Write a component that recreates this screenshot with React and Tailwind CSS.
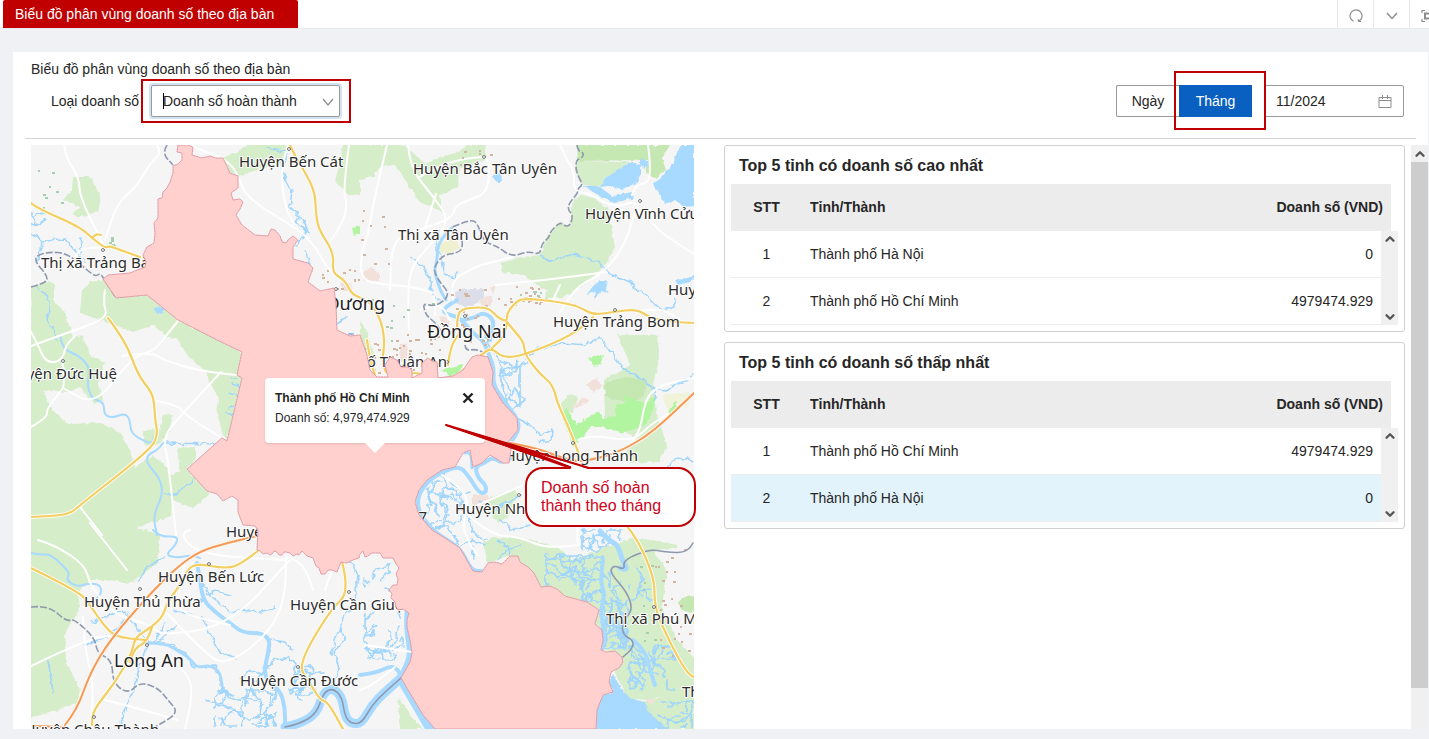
import React from "react";
import { ChevronDown, ChevronUp } from "lucide-react";

const provinceOutline =
  "M178 145L177 152 182 153 182 160 178 164 173 166 173 173 170 182 167 188 163 192 162 198 158 199 158 218 154 223 155 234 154 243 147 247 143 255 146 262 145 267 130 273 108 275 103 279 116 298 147 295 178 320 217 340 242 352 237 375 242 378 227 441 222 438 187 469 207 491 217 494 223 501 232 496 238 500 238 512 243 525 255 526 258 530 257 550 260 551 263 554 267 553 270 555 273 553 274 551 277 552 279 555 282 555 284 552 286 552 290 553 293 556 297 554 299 555 302 551 307 556 313 558 316 566 319 568 321 574 325 574 328 570 332 570 337 572 339 567 341 562 347 563 353 560 359 558 360 554 363 551 365 557 368 556 372 553 380 553 383 558 388 558 393 558 396 564 399 568 396 574 398 579 397 585 393 585 389 590 392 594 391 598 395 602 396 607 398 610 403 609 409 613 407 620 407 627 410 640 412 653 410 662 401 678 423 715 435 729H596L597 710 603 695 613 692 609 682 611 672 619 668 623 662 622 657 615 651 606 652 601 650 603 640 602 630 595 624 599 610 587 602 565 596 557 589 550 586 541 587 534 573 528 567 520 562 518 556 510 556 502 564 495 562 488 563 482 572 473 571 460 548 445 538 432 530 419 515 415 502 419 490 427 480 442 470 455 467 463 453 470 450 473 467 482 463 490 455 503 463 509 463 511 450 508 442 518 430 517 418 503 403 492 385 493 372 488 357 478 355 472 357 463 370 453 376 438 378 437 362 432 361 428 358 422 363 422 373 412 378 412 370 408 367 401 367 397 360 390 357 385 365 388 377 377 377 370 370 367 355 360 335 350 336 337 330 336 305 334 288 320 291 308 282 313 268 308 263 293 259 293 247 298 240 293 236 288 240 286 243 282 242 280 236 275 230 271 229 268 236 255 235 242 225 236 215 240 209 243 202 240 199 233 200 231 193 238 188 238 176 230 173 223 158 216 158 210 156 202 158 192 155 193 147 188 145Z";

const greens = [
  "M73 177L90 177 101 197 98 212 80 217 72 214 80 207 63 200 72 190Z",
  "M223 158L240 150 260 145 287 145 285 152 283 163 263 168 250 172 240 177 230 173Z",
  "M343 145H405L412 152 425 164 437 158 455 153 468 145H487L485 160 460 167 457 187 440 195 443 212 420 202 407 183 395 165 380 167 373 177 360 180 360 195 347 195 335 180 340 163Z",
  "M90 282L108 280 117 298 147 295 178 320 217 340 242 352 237 375 242 378 227 441 223 435 217 413 219 400 213 388 205 372 187 355 177 338 167 337 153 325 133 332 80 313 82 290Z",
  "M31 287L50 280 55 285 53 300 65 313 73 337 82 335 90 355 105 362 98 385 103 400 94 404 80 387 68 392 43 390 52 410 68 424 100 423 120 432 130 450 135 467 153 455 168 468 170 475 180 472 177 448 195 447 195 460 187 469 210 493 193 508 173 500 172 517 153 522 145 527 160 535 158 563 130 583 107 580 90 580 78 593 80 607 65 633 67 663 80 690 77 703 50 713 31 719Z",
  "M143 432L153 428 158 435 163 415 172 414 170 430 163 440 155 446 144 444Z",
  "M573 200L582 195 593 198 608 208 611 225 615 247 605 265 593 278 573 293 560 298 545 298 548 290 540 287 523 275 502 272 502 263 520 257 540 255 547 237 560 222 570 227Z",
  "M577 161L630 162 605 178 600 187 583 185 575 170Z",
  "M618 335H658L659 360 653 385 656 412 667 445 660 462 630 463 627 448 640 440 605 420 604 380 630 365 622 345Z",
  "M483 543L493 538 520 537 557 547 573 560 607 547 620 543 633 537 678 545 678 548 653 550 667 570 662 607 677 640 694 667 694 690 647 700 627 698 615 673 623 660 615 651 601 650 602 630 595 624 599 610 565 596 541 587 520 562 510 556 488 563Z",
  "M643 702L694 690V729H663L650 713Z",
  "M398 698L405 706 411 717 424 729H400Z",
  "M484 500L515 488 517 498 507 518 498 522 490 514Z",
  "M360 320L366 330 371 345 375 358 366 355 360 335Z",
  "M560 405L570 394 578 398 572 412 563 414Z",
];

const darkGreens = [
  "M577 145H670L662 158 666 170 655 178 645 172 648 160 578 161Z",
  "M605 382L627 377 647 380 643 398 627 402 605 397Z",
  "M678 603L687 596 694 597V614L683 611Z",
];

const brightGreens = [
  "M560 413L567 409 576 424 600 411 603 419 616 416 615 405 626 402 624 395 643 403 656 397 652 413 645 425 632 430 620 433 604 427 590 427 582 439 572 447 570 437Z",
  "M596 361L602 354 601 358 605 354 602 360 598 367Z",
  "M668 403L677 399 677 411 671 417 668 411Z",
  "M352 228L360 226V234L354 236Z",
  "M440 370L462 364 462 371 450 376Z",
  "M588 358L598 355 601 361 594 366Z",
];

const pinkPatches = [
  "M363 273L370 267 379 272 379 281 364 280Z",
  "M400 345L407 343 407 360 400 361Z",
  "M586 385L596 378 602 386 594 393Z",
  "M572 408L584 397 589 401 577 409Z",
  "M473 494L488 496 491 506 480 511 472 504Z",
  "M490 287L496 285 493 294Z",
  "M480 297L492 296 491 306 481 306Z",
  "M648 699L653 698 654 703 648 703Z",
  "M340 284L350 282 352 290 344 292Z",
  "M440 318L447 316 450 325 443 328Z",
];

const whiteRoads = [
  "M64 145L66 158 79 177 80 198 105 248",
  "M157 145L162 153 150 163 138 185 117 203 105 240",
  "M105 248L82 246 72 262",
  "M105 290L103 303 108 318 70 332 31 346",
  "M178 321L165 337 155 350 131 358 95 406 63 388",
  "M31 332L38 345 46 363 62 361 66 345 75 336",
  "M63 388L65 377 62 361",
  "M31 427L48 417 46 410 63 388",
  "M122 356L152 352 163 360 200 371 236 375",
  "M153 400L178 405 184 414 220 437",
  "M221 372L181 415 163 437 168 460 176 535",
  "M80 507L102 535",
  "M192 146L205 152 223 158 237 171 245 197 294 227 311 240 330 273 345 282",
  "M288 147L280 165 285 208 294 224",
  "M349 145L343 190 347 203 344 220 331 240",
  "M387 145L375 195 368 235 362 250 360 280 385 285 410 286 434 293",
  "M408 145L410 168 432 195 450 220 430 245 410 268 408 300 409 330",
  "M418 178L440 164 480 156 490 160 488 192 470 200 456 205 452 218 425 228 392 238 390 290",
  "M436 194L425 228",
  "M560 145L567 160 574 171 574 192 590 193 613 208 640 200 632 220 627 240 606 272 577 286 560 312",
  "M639 205L655 228 675 242 694 254",
  "M648 145L653 182 637 184 632 195",
  "M606 272L555 279 495 285",
  "M512 257L480 265 470 270 452 280 453 300",
  "M552 302L560 285",
  "M635 312L660 307 680 320",
  "M694 378L670 382 653 390 645 402 640 430 632 442",
  "M578 440L590 434 632 442 650 425 668 414",
  "M420 310L440 302 450 320",
  "M434 296L435 315",
  "M38 540L55 545 85 565 90 585 104 603 117 615 150 625 163 636 230 625 290 560",
  "M90 523L127 570",
  "M31 666L90 638 110 636",
  "M83 617L85 650 93 680 92 715",
  "M105 700L155 713 177 720",
  "M150 595L205 655 228 665 268 634 285 600 286 558",
  "M185 563L175 600 185 615 230 625",
  "M165 655L190 673 192 700 185 729",
  "M286 557L300 560 310 580 313 590",
  "M365 645L412 652",
  "M360 690L370 687 395 667",
  "M190 530L178 533 200 555 285 560",
  "M442 475L465 490 468 510 462 525 470 545 478 555",
  "M467 510L490 500 530 482 575 470",
  "M468 515L490 535 520 537 545 548 580 545",
  "M580 500L577 530 578 545",
  "M325 590L335 560 342 562",
];

const yellowRoads = [
  "M31 203L37 208 80 227 92 238 105 248 110 246 120 250 140 257",
  "M92 238L96 234 101 235",
  "M290 145L297 160 305 172 315 192 316 215 319 230 334 253 332 273 345 280 352 295 368 300 380 317 385 340 382 362 386 372",
  "M457 330L457 320 460 309 480 307 490 309 497 317 507 322 507 313 515 303 523 298 560 302 580 307 593 315 613 312 637 309 650 318 673 322 694 323",
  "M507 322L518 335 524 343 525 355 540 374 550 382 555 392 557 402 572 435 580 458 600 500 633 530 655 578 654 607 670 643 687 673 694 677",
  "M463 370L483 353 492 348 503 358 525 355 573 335 593 317",
  "M507 322L505 336 492 348",
  "M108 318L125 340 138 375 150 390 154 400 155 420 158 435 150 450 80 505 69 515 31 517",
  "M31 568L80 592 90 605 102 623 115 637 145 640",
  "M259 550L243 563 227 569 195 563 185 573 180 585 167 603 163 616 152 627 135 637 132 653 115 683 93 710 92 725",
  "M152 627L148 641 135 648 130 662",
  "M342 562L350 592 330 610 298 665 308 680 320 700 328 702 343 729",
  "M367 340L370 360 375 375",
  "M448 365L450 348 458 335",
  "M405 375L415 372 422 375",
];

const orangeRoads = [
  "M65 725L77 710 90 673 110 640 147 597 177 567 200 551 227 543 257 536",
  "M510 443L533 447 560 457 577 462 600 458 623 450 653 432 694 393",
  "M33 726L65 727",
];

const boundaries = [
  "M31 287L47 283 47 275 35 262 37 255 50 252 65 253 78 262 95 277 100 273 104 279 116 298",
  "M167 145L162 153 173 165",
  "M577 145L578 151 584 153 582 158 576 160 576 172 583 185 578 188 578 193 569 203 568 210 573 215 570 226 564 226 560 222 550 232 549 238 542 243 540 255 528 251 512 257 498 247 490 244 483 240 477 222 470 220 452 227",
  "M462 240L463 248 457 253 443 255 433 268 438 280 451 295 435 307 423 303 425 312 428 317 438 325 445 340",
  "M31 607L48 605 67 622 73 618 95 638 97 653 112 660 113 683 128 694 140 682 158 688 168 700 179 713 155 727",
  "M465 345L466 351 475 349 485 353",
];

const solidBoundaries = [
  "M693 543L688 553 665 552 650 549 623 560 625 570 613 565 610 573 627 592 633 610 622 622 623 635 633 640 633 648 623 657",
  "M285 727L300 724 317 713 323 693 333 688 342 697 345 717 352 724 362 723 372 705 385 692 401 678",
];

const creeks = [
  "M31 213L36 225 45 220M33 216L44 213M31 225L38 222",
  "M31 233L42 240 65 239 76 252 84 262M42 240L41 250 37 262M82 238L80 252",
  "M36 287L46 295 50 310 47 320 57 340",
  "M264 147L275 150 288 151M288 151L281 170 292 190 290 207 300 217 307 225 305 235 296 245M300 215L296 223 304 227 308 232",
  "M305 252L310 263 304 263 313 272",
  "M334 320L337 323 345 318",
  "M412 258L425 270 432 283 430 290 440 300",
  "M438 230L436 250 442 260 445 275 455 278 457 272",
  "M540 255L553 261 570 255 588 258 600 263 612 275 630 283 640 290 653 302 662 311 675 307 675 296",
  "M163 443L220 444",
  "M163 494L176 494 195 479",
  "M238 378L232 378M239 386L231 384M237 395L230 393M234 406L229 408M232 415L226 412",
  "M92 622L110 615 125 611 135 625 148 642 165 643 185 652 193 667 215 665 223 690 235 697",
  "M85 645L110 635 124 620",
  "M48 660L53 692",
  "M147 645L140 665 133 690 122 720 118 729",
  "M165 623L155 640M178 623L160 640",
  "M165 557L148 567 138 580",
  "M197 575L210 595 230 612 240 610 260 612 275 608M175 610L190 615 203 617 210 635 220 652 235 658",
  "M200 600L215 590 230 597",
  "M270 640L285 642 292 650M262 675L250 670 240 680M262 675L275 660 290 657 296 665",
  "M223 690L232 700 247 697 262 705 258 718M205 700L230 708 250 720M300 700L290 690 302 682 315 690",
  "M340 625L345 640 335 650 340 670 330 690M350 560L358 575 355 600 345 615 335 640 332 655",
  "M270 650L265 668 250 690 245 705",
  "M485 335L490 348 500 360 515 367 530 362 538 370M500 370L508 385 510 400 520 408 510 398 515 388 525 400 512 410",
  "M517 418L530 425 540 435 553 430 552 440 538 442M525 360L535 350 548 347 562 343 585 345 600 338 610 350 625 370 640 378 653 388 665 390 694 375",
  "M442 470L445 485 460 495 470 492M440 495L455 500 465 512 455 525 445 520M465 512L475 535 488 540M445 485L440 500 448 515 440 530",
  "M480 500L492 510 505 505 520 495M500 520L515 530 530 525",
  "M498 560L510 548 520 545M510 558L509 548 497 540",
  "M460 548L470 540 485 545M432 530L445 526 455 535 458 545M470 540L475 560",
  "M653 388L655 398M665 470L675 458 694 460",
];

const wideRivers = [
  ["M60 335L62 349 78 355 90 367 87 385 92 399 104 402 104 415 113 418 125 413 130 420 131 433 142 440 152 444 154 437", 2],
  ["M163 443L158 450 147 455 147 464 160 478 163 495 153 515 157 535", 2],
  ["M31 553L40 555 50 554 62 565 70 573 66 580 77 587 90 583 100 585 102 593 95 600", 2],
  ["M153 530L160 537 178 536 176 545 165 555 178 558 190 555 200 558", 2],
  ["M457 300L445 307 443 313 458 317 466 325 475 335 483 340 490 357 494 369 493 385 505 402 519 421 518 432 510 443", 4],
  ["M452 228L438 240 437 262 434 270 440 290 446 300", 3],
  ["M511 458L503 464 493 457 484 463 475 467 478 478 486 485 486 493 479 493 470 478 460 466 444 471 429 480 418 495 418 510 426 522 436 533 460 548 468 564 474 571 481 571", 4],
  ["M465 453L471 451 472 468", 3],
  ["M197 563L200 580 203 600 215 612 230 623 243 633 262 633 270 640 268 653 263 677 280 690 285 707 285 727", 4],
  ["M408 613L407 627 411 650 409 662 401 678", 7],
  ["M285 727L300 724 317 713 323 693 333 688 342 697 345 717 352 724 362 723 372 705 385 692 401 678", 9],
  ["M402 680L415 702 430 728", 10],
  ["M147 643L165 643 178 651 190 658 197 668 210 665 220 672 222 686", 3],
  ["M360 675L376 673 390 666 398 669 401 678", 4],
  ["M600 531L608 540 618 545 622 560 628 570 620 568", 5],
  ["M603 560L600 580 605 595 600 612 605 630 603 648", 4],
  ["M633 640L645 650 650 670 655 685", 4],
  ["M463 320L475 318 483 312 495 320 490 340", 4],
];

const waters = [
  "M673 163L680 145H694V206L685 207 675 200 665 204 658 192 652 183 660 179 668 170Z",
  "M600 187L605 178 618 169 632 162 641 165 641 175 636 184 622 189 608 186Z",
  "M583 186L600 187 612 196 632 192 634 198 614 203 600 196Z",
  "M640 158L650 162 644 169 640 165Z",
  "M596 729L597 710 603 695 613 692 609 682 613 674 622 690 630 698 645 702 650 713 667 729Z",
  "M594 285L601 281 608 281 606 289 609 293 601 291 594 300 596 292 587 294Z",
  "M496 172L501 172 502 182 497 182 492 177Z",
  "M675 280L687 278 694 273 690 282 678 285Z",
  "M155 307L165 308 162 314 154 312Z",
];

/* Rounds the corners of a polyline by curving through segment midpoints. */
function smooth(d) {
  const n = d.match(/\d+/g).map(Number);
  const last = n.length - 2;
  let out = `M${n[0]} ${n[1]}`;
  for (let i = 2; i < last; i += 2) {
    out += `Q${n[i]} ${n[i + 1]} ${(n[i] + n[i + 2]) / 2} ${(n[i + 1] + n[i + 3]) / 2}`;
  }
  return `${out}L${n[last]} ${n[last + 1]}`;
}

/* Pushes areas that touch the map's frame a little past it, so the rough edge stays outside. */
function bleed(d) {
  return d
    .replace(/\b31 /g, "22 ")
    .replace(/\b694\b/g, "703")
    .replace(/ 145\b/g, " 136")
    .replace(/ 729\b/g, " 738");
}

/* Deterministic walk used for the mangrove channels and the small building specks. */
function makeRandom(seed) {
  let s = seed;
  return () => {
    s = (s * 16807) % 2147483647;
    return s / 2147483647;
  };
}

function channelNetwork(seed, x, y, w, h, count) {
  const rnd = makeRandom(seed);
  let d = "";
  for (let i = 0; i < count; i++) {
    let px = x + rnd() * w;
    let py = y + rnd() * h;
    let a = rnd() * 6.28;
    d += `M${Math.round(px)} ${Math.round(py)}`;
    for (let k = 0; k < 5; k++) {
      a += (rnd() - 0.5) * 1.8;
      px = Math.min(x + w, Math.max(x, px + Math.cos(a) * 6));
      py = Math.min(y + h, Math.max(y, py + Math.sin(a) * 6));
      d += `L${Math.round(px)} ${Math.round(py)}`;
    }
  }
  return d;
}

function specks(seed, x, y, w, h, count) {
  const rnd = makeRandom(seed);
  let d = "";
  for (let i = 0; i < count; i++) {
    d += `M${Math.round(x + rnd() * w)} ${Math.round(y + rnd() * h)}h${rnd() > 0.5 ? 2 : 3}`;
  }
  return d;
}

const channels = [
  channelNetwork(11, 603, 600, 24, 48, 34),
  channelNetwork(23, 546, 556, 64, 32, 20),
  channelNetwork(37, 582, 580, 38, 22, 12),
  channelNetwork(51, 630, 645, 44, 45, 22),
  channelNetwork(67, 582, 530, 40, 20, 9),
  channelNetwork(71, 365, 614, 38, 46, 15),
  channelNetwork(83, 364, 564, 26, 26, 5),
  channelNetwork(97, 215, 690, 60, 36, 18),
  channelNetwork(103, 295, 665, 30, 30, 9),
  channelNetwork(113, 659, 702, 33, 26, 10),
  channelNetwork(131, 500, 362, 20, 55, 6),
  channelNetwork(149, 428, 482, 36, 42, 8),
  channelNetwork(157, 630, 560, 25, 40, 4),
];

const brownSpecks = [
  specks(5, 440, 285, 70, 60, 30),
  specks(7, 373, 335, 70, 38, 40),
  specks(9, 655, 545, 38, 120, 26),
  specks(13, 510, 285, 30, 20, 20),
  specks(17, 322, 270, 40, 20, 12),
  specks(19, 361, 210, 30, 60, 10),
  specks(21, 460, 150, 30, 20, 7),
].join("");

const greenSpecks = [
  specks(25, 38, 155, 30, 55, 8),
  specks(27, 109, 237, 8, 10, 8),
  specks(29, 365, 300, 70, 60, 14),
  specks(31, 640, 560, 14, 90, 10),
  specks(33, 520, 290, 30, 14, 7),
].join("");

const townDots = [
  [103, 250], [289, 149], [336, 289], [484, 157], [640, 201], [465, 316], [615, 310],
  [63, 361], [573, 443], [519, 495], [209, 564], [140, 589], [349, 592], [147, 645],
  [298, 667], [94, 717], [654, 607], [447, 362],
];

const underLabels = [
  ["Thị xã Trảng Bàng", 41, 268, "start", "town"],
  ["Bình Dương", 385, 310, "end", "city"],
  ["Thành phố Thuận An", 447, 367, "end", "town"],
  ["Huyện Long Thành", 638, 461, "end", "town"],
  ["Quận 7", 427, 522, "end", "town"],
  ["Huyện Bình Chánh", 226, 537, "start", "town"],
  ["Huyện Cần Giuộc", 290, 610, "start", "town"],
];

const labels = [
  ["Huyện Bến Cát", 239, 167, "start", "town"],
  ["Huyện Bắc Tân Uyên", 413, 174, "start", "town"],
  ["Huyện Vĩnh Cửu", 585, 219, "start", "town"],
  ["Thị xã Tân Uyên", 398, 240, "start", "town"],
  ["Đồng Nai", 427, 338, "start", "city"],
  ["Huyện Trảng Bom", 553, 327, "start", "town"],
  ["Huy", 668, 295, "start", "town"],
  ["Huyện Đức Huệ", 117, 379, "end", "town"],
  ["Huyện Nhơ", 455, 514, "start", "town"],
  ["Huyện Bến Lức", 158, 582, "start", "town"],
  ["Huyện Thủ Thừa", 84, 607, "start", "town"],
  ["Long An", 114, 667, "start", "city"],
  ["Huyện Cần Đước", 240, 686, "start", "town"],
  ["Huyện Châu Thành", 159, 735, "end", "town"],
  ["Thị xã Phú Mỹ", 606, 624, "start", "town"],
  ["Th", 682, 697, "start", "town"],
];

function MapLabel({ label }) {
  const [text, x, y, anchor, kind] = label;
  return (
    <text
      x={x}
      y={y}
      textAnchor={anchor}
      className={
        kind === "city"
          ? "fill-[#222222] stroke-white stroke-2 font-['Noto_Sans'] text-[18px] [paint-order:stroke]"
          : "fill-[#2b2b2b] stroke-white stroke-2 font-['Noto_Sans'] text-[15px] [paint-order:stroke]"
      }
    >
      {text}
    </text>
  );
}

function Paths({ list, ...rest }) {
  return (
    <g {...rest}>
      {list.map((d) => (
        <path key={d} d={d} />
      ))}
    </g>
  );
}

const greenAreas = greens.map(bleed);
const darkGreenAreas = darkGreens.map(bleed);
const waterAreas = waters.map(bleed);
const whiteLines = whiteRoads.map(smooth);
const yellowLines = yellowRoads.map(smooth);
const orangeLines = orangeRoads.map(smooth);
const dashedLines = boundaries.map(smooth);
const solidLines = solidBoundaries.map(smooth);

function RegionMap() {
  return (
    <svg
      viewBox="31 145 663 584"
      preserveAspectRatio="xMinYMin slice"
      className="block h-full w-full"
      role="img"
      aria-label="Bản đồ doanh số"
      strokeLinejoin="round"
      strokeLinecap="round"
    >
      <defs>
        <filter id="wobble" x="0" y="0" width="1" height="1">
          <feTurbulence type="fractalNoise" baseFrequency="0.14" numOctaves="2" seed="4" />
          <feDisplacementMap in="SourceGraphic" scale="7" xChannelSelector="R" yChannelSelector="G" />
        </filter>
        <filter id="rough" x="0" y="0" width="1" height="1">
          <feTurbulence type="fractalNoise" baseFrequency="0.2" numOctaves="2" seed="9" />
          <feDisplacementMap in="SourceGraphic" scale="4" xChannelSelector="R" yChannelSelector="G" />
        </filter>
      </defs>
      <rect x="31" y="145" width="663" height="584" fill="#f5f5f5" />
      <g filter="url(#rough)">
        <Paths list={greenAreas} fill="#d6edca" />
        <Paths list={darkGreenAreas} fill="#c5e7b2" />
        <Paths list={brightGreens} fill="#b2f5a0" />
        <Paths list={pinkPatches} fill="#f2e0da" />
        <path d="M455 292L465 289 484 289 484 297 475 304 466 308 456 303Z" fill="#dcdfe9" />
        <path d="M440 243L455 238 460 248 448 254 439 252Z" fill="#eef0cf" />
        <path d="M662 395L690 392 688 408 675 402 668 412Z" fill="#f0f2da" />
        <Paths list={waterAreas} fill="#a8daff" />
      </g>
      <g fill="none" stroke="#a0d5fc" filter="url(#wobble)">
        <Paths list={creeks} strokeWidth="1.6" />
        <Paths list={channels} strokeWidth="1.7" />
      </g>
      <g fill="none" stroke="#a8daff">
        {wideRivers.map(([d, w]) => (
          <path key={d} d={smooth(d)} strokeWidth={w} />
        ))}
      </g>
      <Paths list={whiteLines} fill="none" stroke="#ffffff" strokeWidth="2" />
      <path d={brownSpecks} stroke="#d3b4a0" strokeWidth="2" strokeLinecap="butt" />
      <path d={greenSpecks} stroke="#a5cfae" strokeWidth="2" strokeLinecap="butt" />
      <Paths list={dashedLines} fill="none" stroke="#8e98ae" strokeWidth="1.6" strokeDasharray="7 2" strokeLinecap="butt" />
      <Paths list={solidLines} fill="none" stroke="#8e98ae" strokeWidth="1.6" />
      <Paths list={yellowLines} fill="none" stroke="#fffdf3" strokeWidth="4" />
      <Paths list={yellowLines} fill="none" stroke="#f2ce63" strokeWidth="2.2" />
      <Paths list={orangeLines} fill="none" stroke="#fff6ee" strokeWidth="4" />
      <Paths list={orangeLines} fill="none" stroke="#f49a57" strokeWidth="2" />
      <g fill="#ffffff" stroke="#777777">
        {townDots.map(([x, y]) => (
          <circle key={`${x}-${y}`} cx={x} cy={y} r="1.5" />
        ))}
      </g>
      {underLabels.map((label) => (
        <MapLabel key={label[0]} label={label} />
      ))}
      <path d={provinceOutline} fill="#ffd0ce" stroke="#df9ba5" strokeDasharray="2 1" />
      <path d="M349 334L353 334" stroke="#a0b8e0" strokeWidth="2" />
      {labels.map((label) => (
        <MapLabel key={label[0]} label={label} />
      ))}
    </svg>
  );
}

function SalesPopup() {
  return (
    <div className="absolute top-[233px] left-[234px] h-[65px] w-[220px] rounded-sm bg-white px-[10px] py-[10px] text-xs leading-5 text-[#262626] shadow-sm">
      <div className="flex items-center justify-between">
        <strong>Thành phố Hồ Chí Minh</strong>
        <button type="button" aria-label="Đóng" className="mr-px">
          <svg viewBox="0 0 12 12" className="size-3" stroke="#222222" strokeWidth="2.4" fill="none">
            <path d="M1.500 1.500L10.500 10.500M10.500 1.500L1.500 10.500" />
          </svg>
        </button>
      </div>
      <p>Doanh số: 4,979,474.929</p>
      <svg viewBox="0 0 20 10" className="absolute top-full left-1/2 h-[10px] w-5 -translate-x-1/2" fill="#ffffff">
        <path d="M0 0H20L10 10Z" />
      </svg>
    </div>
  );
}

function Callout() {
  return (
    <div className="absolute top-[322px] left-[494px] h-[60px] w-[171px] rounded-[18px] border-2 border-[#c00000] bg-white pt-[10px] pl-[14px] text-base leading-[18px] text-[#d0021b]">
      Doanh số hoàn
      <br />
      thành theo tháng
      <svg
        viewBox="0 0 160 50"
        className="absolute -top-[47px] -left-[84px] h-[50px] w-40"
        strokeLinejoin="round"
        aria-hidden="true"
      >
        <path d="M3 3L130 47.500H147Z" fill="#ffffff" />
        <path d="M128 46L3 3L146 46" fill="none" stroke="#c00000" strokeWidth="2" />
        <path d="M3 3L80 26 128 45 80 30Z" fill="#c00000" stroke="#c00000" />
      </svg>
    </div>
  );
}

function ScrollBar({ className = "", children }) {
  return (
    <div aria-hidden="true" className={`flex w-[17px] flex-col items-center bg-[#f0f0f0] text-[#555555] ${className}`}>
      {children}
    </div>
  );
}

function RankingCard({ title, rows }) {
  return (
    <section className="rounded-[3px] border border-[#d0d0d0] bg-white p-[6px]">
      <h2 className="flex h-8 items-start px-2 pt-[2px] text-base leading-6 font-bold">{title}</h2>
      <div className="relative pr-[7px]">
        <table className="w-full table-fixed border-separate border-spacing-0 text-sm">
          <colgroup>
            <col className="w-[71px]" />
            <col />
            <col className="w-[200px]" />
            <col className="w-[10px]" />
          </colgroup>
          <thead>
            <tr className="h-[47px] bg-[#ececec]">
              <th scope="col" className="border-b border-[#ececec] text-center">STT</th>
              <th scope="col" className="border-b border-[#ececec] px-2 text-left">Tỉnh/Thành</th>
              <th scope="col" colSpan={2} className="border-b border-[#ececec] px-2 text-right">Doanh số (VND)</th>
            </tr>
          </thead>
          <tbody>
            {rows.map((row, index) => (
              <tr key={row.name} className={row.active ? "h-[47px] bg-[#e2f3fc]" : "h-[47px]"}>
                <td className="border-b border-[#ececec] text-center">{index + 1}</td>
                <td className="border-b border-[#ececec] px-2">{row.name}</td>
                <td className="border-b border-[#ececec] px-2 text-right">{row.value}</td>
                <td className="border-b border-[#ececec]" />
              </tr>
            ))}
          </tbody>
        </table>
        <ScrollBar className="absolute top-[47px] right-0 bottom-0 justify-between py-px">
          <ChevronUp className="size-[14px]" strokeWidth={4} />
          <ChevronDown className="size-[14px]" strokeWidth={4} />
        </ScrollBar>
      </div>
    </section>
  );
}

const highest = [
  { name: "Thành phố Hà Nội", value: "0" },
  { name: "Thành phố Hồ Chí Minh", value: "4979474.929" },
];

const lowest = [
  { name: "Thành phố Hồ Chí Minh", value: "4979474.929" },
  { name: "Thành phố Hà Nội", value: "0", active: true },
];

function Highlight({ className }) {
  return <div aria-hidden="true" className={`pointer-events-none absolute border-2 border-[#c00000] ${className}`} />;
}

export default function App() {
  return (
    <div className="flex h-screen flex-col overflow-hidden bg-[#f0f1f5] font-['Liberation_Sans',Arial,sans-serif] text-sm text-[#262626]">
      <header className="flex h-[29px] shrink-0 items-start justify-between border-b border-[#e8e8e8] bg-white pl-[3px]">
        <a href="#chart" className="flex h-7 w-[295px] items-center rounded-t-xs bg-[#c00000] px-3 text-white">
          Biểu đồ phân vùng doanh số theo địa bàn
        </a>
        <div className="-mr-4 flex h-7 text-[#8c8c8c]">
          <button type="button" aria-label="Tải lại" className="flex w-9 items-center justify-center border-l border-[#e8e8e8] pt-[3px]">
            <svg viewBox="0 0 14 14" className="size-[14px]" fill="none" stroke="currentColor" strokeWidth="1.200">
              <path d="M4.500 12.300A6 6 0 1 1 9.800 12.200M9 10.300L9.700 12.400 12 12.500" />
            </svg>
          </button>
          <button type="button" aria-label="Mở rộng" className="flex w-9 items-center justify-center border-l border-[#e8e8e8] pt-[3px]">
            <svg viewBox="0 0 12 8" className="h-2 w-3" fill="none" stroke="currentColor" strokeWidth="1.400">
              <path d="M1 1L6 6.500 11 1" />
            </svg>
          </button>
          <button type="button" aria-label="Toàn màn hình" className="flex w-9 items-center justify-center border-l border-[#e8e8e8] pt-[3px]">
            <svg viewBox="0 0 14 14" className="size-[14px]" fill="none" stroke="currentColor" strokeWidth="1.200">
              <path d="M1 4V1.500H4M10 1.500H13V4M13 10V12.500H10M4 12.500H1V10" />
              <rect x="4" y="4.500" width="6" height="5" strokeWidth="2" />
            </svg>
          </button>
        </div>
      </header>

      <main id="chart" className="mt-[23px] mr-px mb-[10px] ml-[13px] flex min-h-0 flex-1 flex-col bg-white">
        <div className="mx-3 border-b border-[#d4d4d4] pr-3 pb-[21px] pl-[6px]">
          <h1 className="pt-2 leading-[18px]">Biểu đồ phân vùng doanh số theo địa bàn</h1>
          <div className="mt-[7px] flex items-center justify-between">
            <div className="flex items-center gap-3 pl-5">
              <label htmlFor="sales-type">Loại doanh số</label>
              <div className="relative">
                <select
                  id="sales-type"
                  className="block h-8 w-[189px] appearance-none rounded-xs border border-[#999999] bg-white pr-8 pl-[11px] text-sm ring-2 ring-[#d3e2f3] outline-none"
                >
                  <option>Doanh số hoàn thành</option>
                </select>
                <div className="pointer-events-none absolute top-2 left-3 h-4 w-px bg-black" />
                <svg
                  viewBox="0 0 12 8"
                  className="pointer-events-none absolute top-[13px] right-[6px] h-2 w-3"
                  fill="none"
                  stroke="#8c8c8c"
                  strokeWidth="1.200"
                >
                  <path d="M1 1L6 7 11 1" />
                </svg>
                <Highlight className="-top-[6px] -right-[11px] -bottom-[6px] -left-[10px]" />
              </div>
            </div>
            <div className="flex items-center gap-3">
              <div className="flex" role="group" aria-label="Kỳ">
                <button type="button" className="h-8 w-[63px] rounded-l-xs border border-r-0 border-[#999999]">
                  Ngày
                </button>
                <div className="relative">
                  <button type="button" aria-pressed="true" className="block h-8 w-[73px] bg-[#0a60c0] text-white">
                    Tháng
                  </button>
                  <Highlight className="-top-[14px] -right-[14px] -bottom-[13px] -left-[5px] z-10" />
                </div>
              </div>
              <div className="relative">
                <input
                  aria-label="Tháng"
                  defaultValue="11/2024"
                  className="block h-8 w-[140px] rounded-r-xs border border-[#999999] px-[11px] text-sm outline-none"
                />
                <svg
                  viewBox="0 0 14 14"
                  className="pointer-events-none absolute top-[10px] right-3 size-[14px]"
                  fill="none"
                  stroke="#8c8c8c"
                >
                  <path d="M1 2.500H13V12.500H1ZM1 5.500H13M4.500 0V4M9.500 0V4" />
                </svg>
              </div>
            </div>
          </div>
        </div>

        <div className="mt-[6px] flex min-h-0 flex-1 gap-[6px] pl-[18px]">
          <div className="grid min-w-0 flex-1 grid-cols-[663fr_681fr] gap-[30px]">
            <div className="relative min-h-0">
              <div className="absolute inset-0 overflow-hidden">
                <RegionMap />
              </div>
              <SalesPopup />
              <Callout />
            </div>
            <div className="flex flex-col gap-[10px]">
              <RankingCard title="Top 5 tỉnh có doanh số cao nhất" rows={highest} />
              <RankingCard title="Top 5 tỉnh có doanh số thấp nhất" rows={lowest} />
            </div>
          </div>
          <ScrollBar>
            <div className="flex h-[17px] shrink-0 items-center">
              <ChevronUp className="size-[14px]" strokeWidth={4} />
            </div>
            <div className="h-[90%] w-full bg-[#cdcdcd]" />
          </ScrollBar>
        </div>
      </main>
    </div>
  );
}
